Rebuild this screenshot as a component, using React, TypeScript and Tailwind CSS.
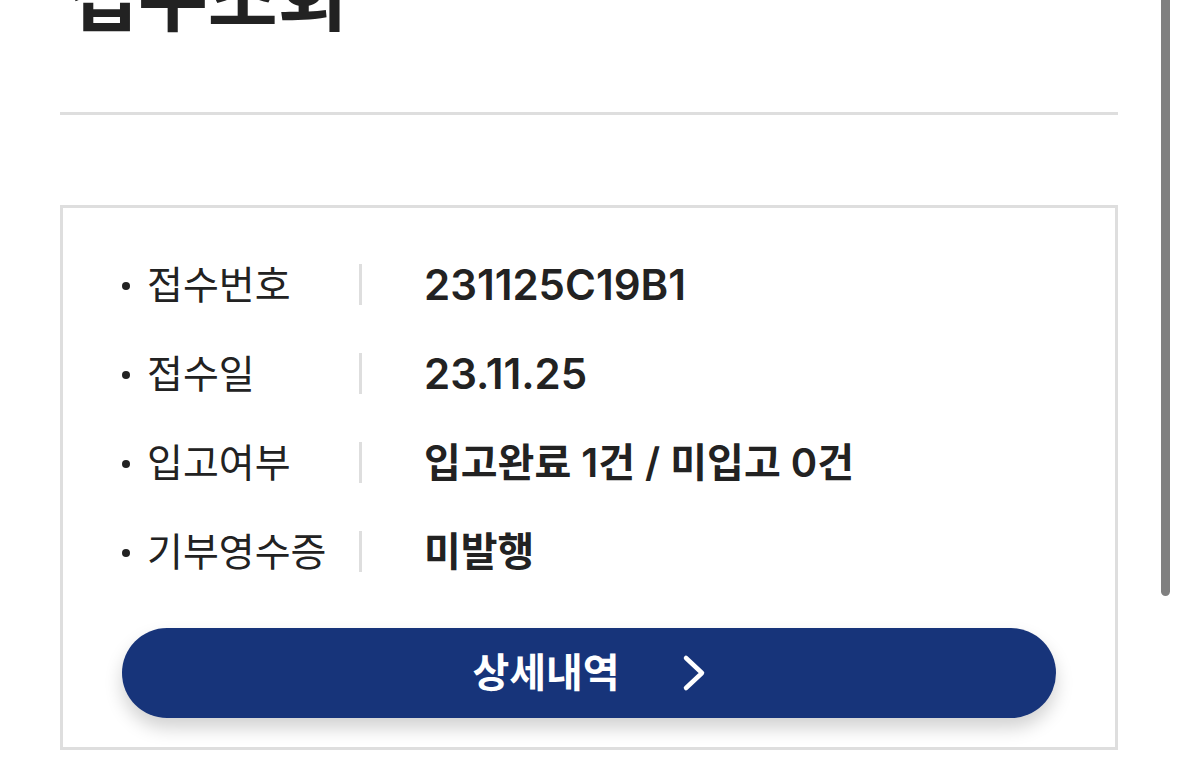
import React from "react";

const rows: { label: string; value: string; size: string }[] = [
  { label: "접수번호", value: "231125C19B1", size: "text-[42px]" },
  { label: "접수일", value: "23.11.25", size: "text-[42px]" },
  { label: "입고여부", value: "입고완료 1건 / 미입고 0건", size: "text-[40px]" },
  { label: "기부영수증", value: "미발행", size: "text-[40px]" },
];

export default function App() {
  return (
    <div
      className="relative w-[1179px] h-[770px] overflow-hidden bg-white text-[#222]"
      style={{ fontFamily: 'Inter, "Noto Sans CJK KR", sans-serif' }}
    >
      <div className="px-[60px] pr-[61px]">
        <h1 className="mt-[-41px] ml-[8px] text-[76px] font-bold leading-none">
          접수조회
        </h1>
        <div className="mt-[77px] h-[3px] bg-[#dedede]" />
        <div className="mt-[90px] border-[3px] border-[#dedede] px-[59px] pt-[56px] pb-[29px]">
          <div className="flex flex-col gap-[48px]">
            {rows.map((r) => (
              <div key={r.label} className="flex items-center h-[41px]">
                <div className="flex items-center w-[237px]">
                  <span className="w-[8px] h-[8px] rounded-full bg-[#222] mt-[2px]" />
                  <span className="ml-[17px] text-[39px] leading-none">
                    {r.label}
                  </span>
                </div>
                <div className="w-[3px] h-[41px] bg-[#dedede]" />
                <div className={`ml-[62px] ${r.size} font-semibold leading-none`}>
                  {r.value}
                </div>
              </div>
            ))}
          </div>
          <button className="mt-[56px] flex w-full h-[90px] items-center justify-center gap-[62px] rounded-full bg-[#17347a] text-white shadow-[0_10px_18px_rgba(0,0,0,0.18)]">
            <span className="text-[40px] font-bold leading-none">상세내역</span>
            <svg width="24" height="38" viewBox="0 0 24 38" fill="none">
              <path
                d="M4 4 L20 19 L4 34"
                stroke="white"
                strokeWidth="4.5"
                strokeLinecap="round"
                strokeLinejoin="round"
              />
            </svg>
          </button>
        </div>
      </div>
      <div className="absolute top-0 right-[9px] w-[9px] h-[596px] rounded-b-full bg-[#808080]" />
    </div>
  );
}
